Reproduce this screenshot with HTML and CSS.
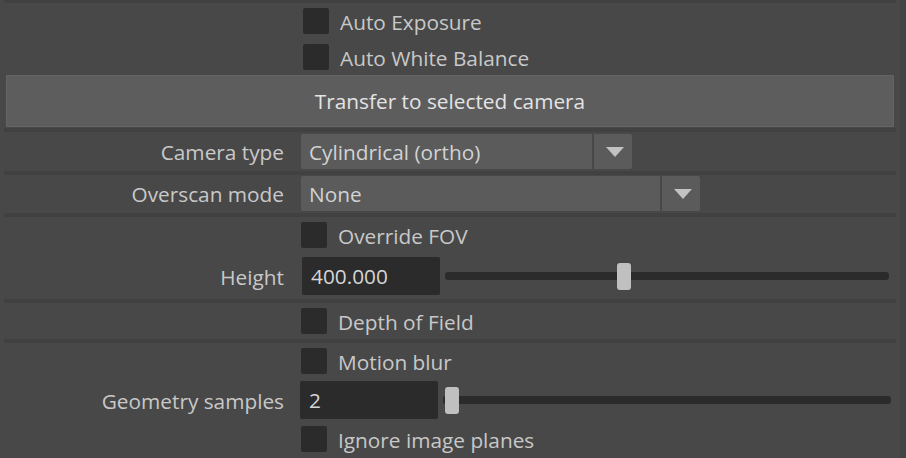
FILE: index.html
```html
<!DOCTYPE html>
<html lang="en">
<head>
  <meta charset="UTF-8">
  <link rel="stylesheet" href="styles.css">
  <title>Camera Settings</title>
</head>
<body>
  <div class="panel">
    <div class="sep sep-top"></div>
    <div class="group">
      <div class="row check-row">
        <div class="label"></div>
        <span class="box shifted"></span><span class="check-text">Auto Exposure</span>
      </div>
      <div class="row check-row">
        <div class="label"></div>
        <span class="box shifted"></span><span class="check-text">Auto White Balance</span>
      </div>
      <button class="transfer">Transfer to selected camera</button>
    </div>
    <div class="sep"></div>
    <div class="group combo-group">
      <div class="row combo-row">
        <div class="label">Camera type</div>
        <div class="combo combo-short">
          <span class="combo-value">Cylindrical (ortho)</span>
          <span class="combo-arrow"><span class="tri"></span></span>
        </div>
      </div>
    </div>
    <div class="sep"></div>
    <div class="group combo-group second">
      <div class="row combo-row">
        <div class="label">Overscan mode</div>
        <div class="combo combo-long">
          <span class="combo-value">None</span>
          <span class="combo-arrow"><span class="tri"></span></span>
        </div>
      </div>
    </div>
    <div class="sep"></div>
    <div class="group">
      <div class="row check-row">
        <div class="label"></div>
        <span class="box"></span><span class="check-text">Override FOV</span>
      </div>
      <div class="row field-row">
        <div class="label">Height</div>
        <div class="field height-field">400.000</div>
        <div class="slider height-slider">
          <span class="handle" style="left: 172px"></span>
        </div>
      </div>
    </div>
    <div class="sep"></div>
    <div class="group">
      <div class="row check-row">
        <div class="label"></div>
        <span class="box"></span><span class="check-text">Depth of Field</span>
      </div>
    </div>
    <div class="sep"></div>
    <div class="group">
      <div class="row check-row">
        <div class="label"></div>
        <span class="box"></span><span class="check-text">Motion blur</span>
      </div>
      <div class="row field-row geo-row">
        <div class="label">Geometry samples</div>
        <div class="field geo-field">2</div>
        <div class="slider geo-slider">
          <span class="handle" style="left: 2px"></span>
        </div>
      </div>
      <div class="row check-row">
        <div class="label"></div>
        <span class="box"></span><span class="check-text">Ignore image planes</span>
      </div>
    </div>
  </div>
</body>
</html>
```

FILE: styles.css
```css
body {
  margin: 0;
  padding: 0;
  background-color: #444444;
  font-family: 'Open Sans', 'Noto Sans', sans-serif;
  font-size: 20.8px;
  color: #c8c8c8;
}

.panel {
  width: 900px;
  height: 458px;
  background-color: #484848;
  overflow: hidden;
}

.sep {
  height: 4px;
  margin: 0 4px;
  background-color: #414141;
}

.sep-top {
  height: 3px;
}

.group {
  display: flex;
  flex-direction: column;
}

.row {
  display: flex;
  align-items: center;
}

.label {
  width: 284px;
  flex: none;
  text-align: right;
  margin-right: 17px;
  white-space: nowrap;
  padding-top: 1px;
}

.check-row {
  height: 36px;
}

.box {
  width: 26px;
  height: 26px;
  flex: none;
  border-radius: 2px;
  background-color: #2b2b2b;
}

.box.shifted {
  margin-left: 2px;
}

.check-text {
  margin-left: 11px;
  padding-top: 1px;
}

.transfer {
  margin: 0 6px 1px 6px;
  height: 52px;
  background-color: #5d5d5d;
  border: 1px solid #656565;
  border-radius: 1px;
  color: #e4e4e4;
  font-family: inherit;
  font-size: 20.8px;
  padding: 0;
}

.combo-group {
  padding: 2px 0;
}

.combo-group.second {
  padding: 1px 0 2px 0;
}

.combo {
  display: flex;
  height: 35px;
}

.combo-short {
  width: 331px;
}

.combo-long {
  width: 399px;
}

.combo-value {
  flex: 1;
  display: flex;
  align-items: center;
  padding-left: 8px;
  background-color: #5b5b5b;
  border-radius: 2px 0 0 2px;
  margin-right: 2px;
  color: #d2d2d2;
}

.combo-arrow {
  width: 38px;
  display: flex;
  align-items: center;
  justify-content: center;
  background-color: #5b5b5b;
  border-radius: 0 2px 2px 0;
}

.tri {
  width: 0;
  height: 0;
  margin-left: 3px;
  border-left: 9px solid transparent;
  border-right: 9px solid transparent;
  border-top: 10px solid #c2c2c2;
}

.field-row {
  height: 46px;
}

.field {
  width: 138px;
  height: 38px;
  flex: none;
  box-sizing: border-box;
  padding-left: 9px;
  display: flex;
  align-items: center;
  background-color: #2b2b2b;
  border-radius: 2px;
  color: #d6d6d6;
}

.height-field {
  margin-left: 1px;
}

.geo-row {
  height: 42px;
}

.geo-field {
  margin-left: -1px;
}

.slider {
  position: relative;
  height: 8px;
  border-radius: 3px;
  background-color: #2b2b2b;
}

.height-slider {
  margin-left: 5px;
  width: 444px;
}

.geo-slider {
  margin-left: 5px;
  width: 448px;
}

.handle {
  position: absolute;
  top: -9px;
  width: 14px;
  height: 27px;
  border-radius: 3px;
  background-color: #c0c0c0;
}
```
